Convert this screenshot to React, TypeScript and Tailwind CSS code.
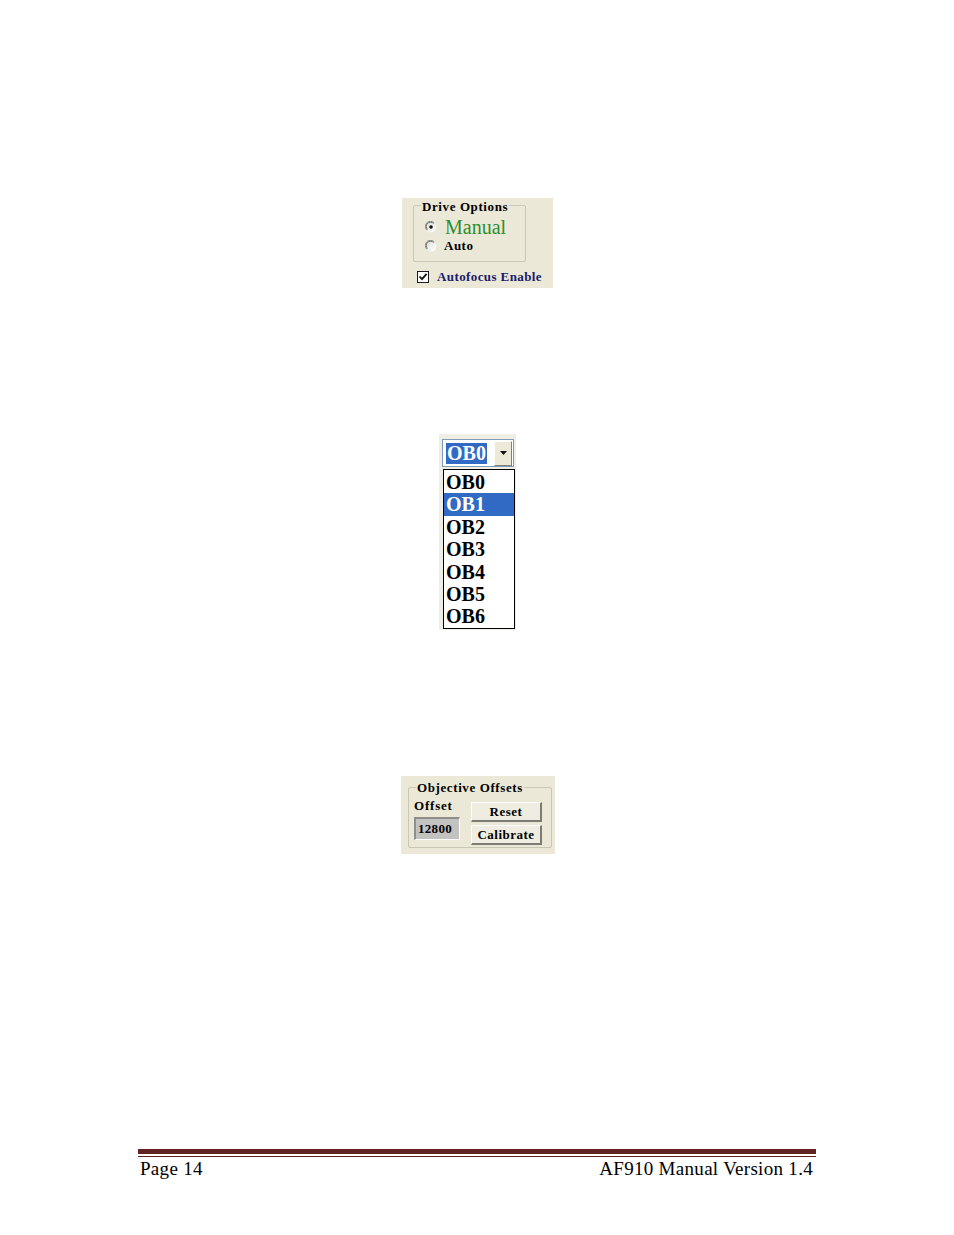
import React from "react";

const serif = { fontFamily: '"Liberation Serif", "Times New Roman", serif' };

function Radio({ checked }: { checked?: boolean }) {
  return (
    <svg width="12" height="12" viewBox="0 0 12 12" className="shrink-0">
      <defs>
        <linearGradient id={checked ? "rg1" : "rg2"} x1="0" y1="0" x2="1" y2="1">
          <stop offset="0" stopColor="#dcdcd4" />
          <stop offset="1" stopColor="#ffffff" />
        </linearGradient>
      </defs>
      <circle cx="6" cy="6" r="5.5" fill={`url(#${checked ? "rg1" : "rg2"})`} />
      <path d="M1.8 9.2 A5 5 0 0 1 9.2 1.8" stroke="#8a8a86" strokeWidth="1" fill="none" />
      <path d="M2.5 8.5 A4 4 0 0 1 8.5 2.5" stroke="#555" strokeWidth="0.8" fill="none" />
      {checked && <circle cx="6" cy="6" r="1.8" fill="#111" />}
    </svg>
  );
}

function Check() {
  return (
    <div className="w-[12px] h-[12px] bg-white border border-[#1c1c1c] flex items-center justify-center shrink-0">
      <svg width="10" height="10" viewBox="0 0 10 10">
        <path d="M1.5 4.5 L4 7.2 L8.6 1.8" stroke="#111" strokeWidth="1.8" fill="none" />
      </svg>
    </div>
  );
}

function DriveOptions() {
  return (
    <div className="w-[151px] h-[90px] bg-[#ebe8d7] pt-[7px] pl-[11px]" style={serif}>
      <div className="relative w-[113px] h-[57px] border border-[#c9c7b6] rounded-[2px]">
        <div className="absolute -top-[7px] left-[7px] bg-[#ebe8d7] px-[1px] text-[13px] leading-[16px] font-bold tracking-[0.6px] text-black">
          Drive Options
        </div>
        <div className="pt-[11px] pl-[11px] flex flex-col">
          <div className="flex items-center gap-[8px] h-[20px]">
            <Radio checked />
            <span className="text-[20px] leading-[20px] text-[#2e8f2e]">Manual</span>
          </div>
          <div className="flex items-center gap-[7px] h-[18px]">
            <Radio />
            <span className="text-[13px] leading-[16px] font-bold tracking-[0.5px] text-black">Auto</span>
          </div>
        </div>
      </div>
      <div className="flex items-center gap-[8px] mt-[7px] ml-[4px]">
        <Check />
        <span className="text-[13px] leading-[16px] font-bold tracking-[0.4px] text-[#1b1b6a]">Autofocus Enable</span>
      </div>
    </div>
  );
}

function ObDropdown() {
  const items = ["OB0", "OB1", "OB2", "OB3", "OB4", "OB5", "OB6"];
  return (
    <div className="w-[77px] h-[196px] bg-[#efeee4] pt-[5px] pl-[3px]" style={serif}>
      <div className="w-[72px] h-[28px] bg-white border border-[#7f9db9] flex items-center pl-[3px] pr-[1px]">
        <div className="bg-[#316ac5] text-white text-[20px] leading-[21px] font-bold px-[1px] h-[21px]">OB0</div>
        <div className="flex-1" />
        <div className="w-[18px] h-[25px] bg-[#ece9d8] border-t border-l border-white border-r-[1px] border-b-[1px] border-r-[#808080] border-b-[#808080] flex items-center justify-center">
          <svg width="7" height="4" viewBox="0 0 7 4">
            <path d="M0 0 H7 L3.5 4 Z" fill="#111" />
          </svg>
        </div>
      </div>
      <div className="mt-[2px] ml-[1px] w-[72px] h-[160px] bg-white border border-black pt-[1px]">
        {items.map((it) => (
          <div
            key={it}
            className={
              "h-[22.4px] leading-[22.4px] text-[20px] font-bold pl-[2px] " +
              (it === "OB1" ? "bg-[#316ac5] text-white" : "text-black")
            }
          >
            {it}
          </div>
        ))}
      </div>
    </div>
  );
}

function XpButton({ label }: { label: string }) {
  return (
    <div className="w-[71px] h-[20px] bg-[#efede1] border-t border-l border-white border-r-[2px] border-b-[2px] border-r-[#7d7c72] border-b-[#7d7c72] flex items-center justify-center text-[13px] font-bold tracking-[0.5px] text-black leading-[16px]">
      {label}
    </div>
  );
}

function ObjectiveOffsets() {
  return (
    <div className="w-[154px] h-[78px] bg-[#ebe8d7] pt-[11px] pl-[7px]" style={serif}>
      <div className="relative w-[144px] h-[61px] border border-[#c9c7b6] rounded-[2px]">
        <div className="absolute -top-[8px] left-[7px] bg-[#ebe8d7] px-[1px] text-[13px] leading-[16px] font-bold tracking-[0.6px] text-black">
          Objective Offsets
        </div>
        <div className="flex pt-[12px] pl-[5px] gap-[11px]">
          <div className="flex flex-col">
            <div className="text-[13px] leading-[16px] font-bold tracking-[0.8px] text-black -mt-[2px]">Offset</div>
            <div className="mt-[3px] w-[46px] h-[23px] bg-[#c2c2c0] border-t-[2px] border-l-[2px] border-[#8e8e8a] border-r border-b border-r-white border-b-white flex items-center pl-[2px] text-[13px] font-bold tracking-[0.3px] text-black">
              12800
            </div>
          </div>
          <div className="flex flex-col gap-[3px] mt-[2px]">
            <XpButton label="Reset" />
            <XpButton label="Calibrate" />
          </div>
        </div>
      </div>
    </div>
  );
}

export default function App() {
  return (
    <div className="w-[954px] h-[1235px] bg-white relative flex flex-col" style={serif}>
      <div className="pt-[198px] pl-[402px]">
        <DriveOptions />
      </div>
      <div className="pt-[146px] pl-[439px]">
        <ObDropdown />
      </div>
      <div className="pt-[146px] pl-[401px]">
        <ObjectiveOffsets />
      </div>
      <div className="mt-[295px] ml-[138px] w-[678px]">
        <div className="h-[5px] bg-[#622423]" />
        <div className="h-[1px] bg-[#622423] mt-[2px]" />
        <div className="flex justify-between mt-[1px] pl-[2px] pr-[3px] text-[19px] leading-[22px] text-black">
          <span className="tracking-[0.3px]">Page 14</span>
          <span className="tracking-[0.3px]">AF910 Manual Version 1.4</span>
        </div>
      </div>
    </div>
  );
}
